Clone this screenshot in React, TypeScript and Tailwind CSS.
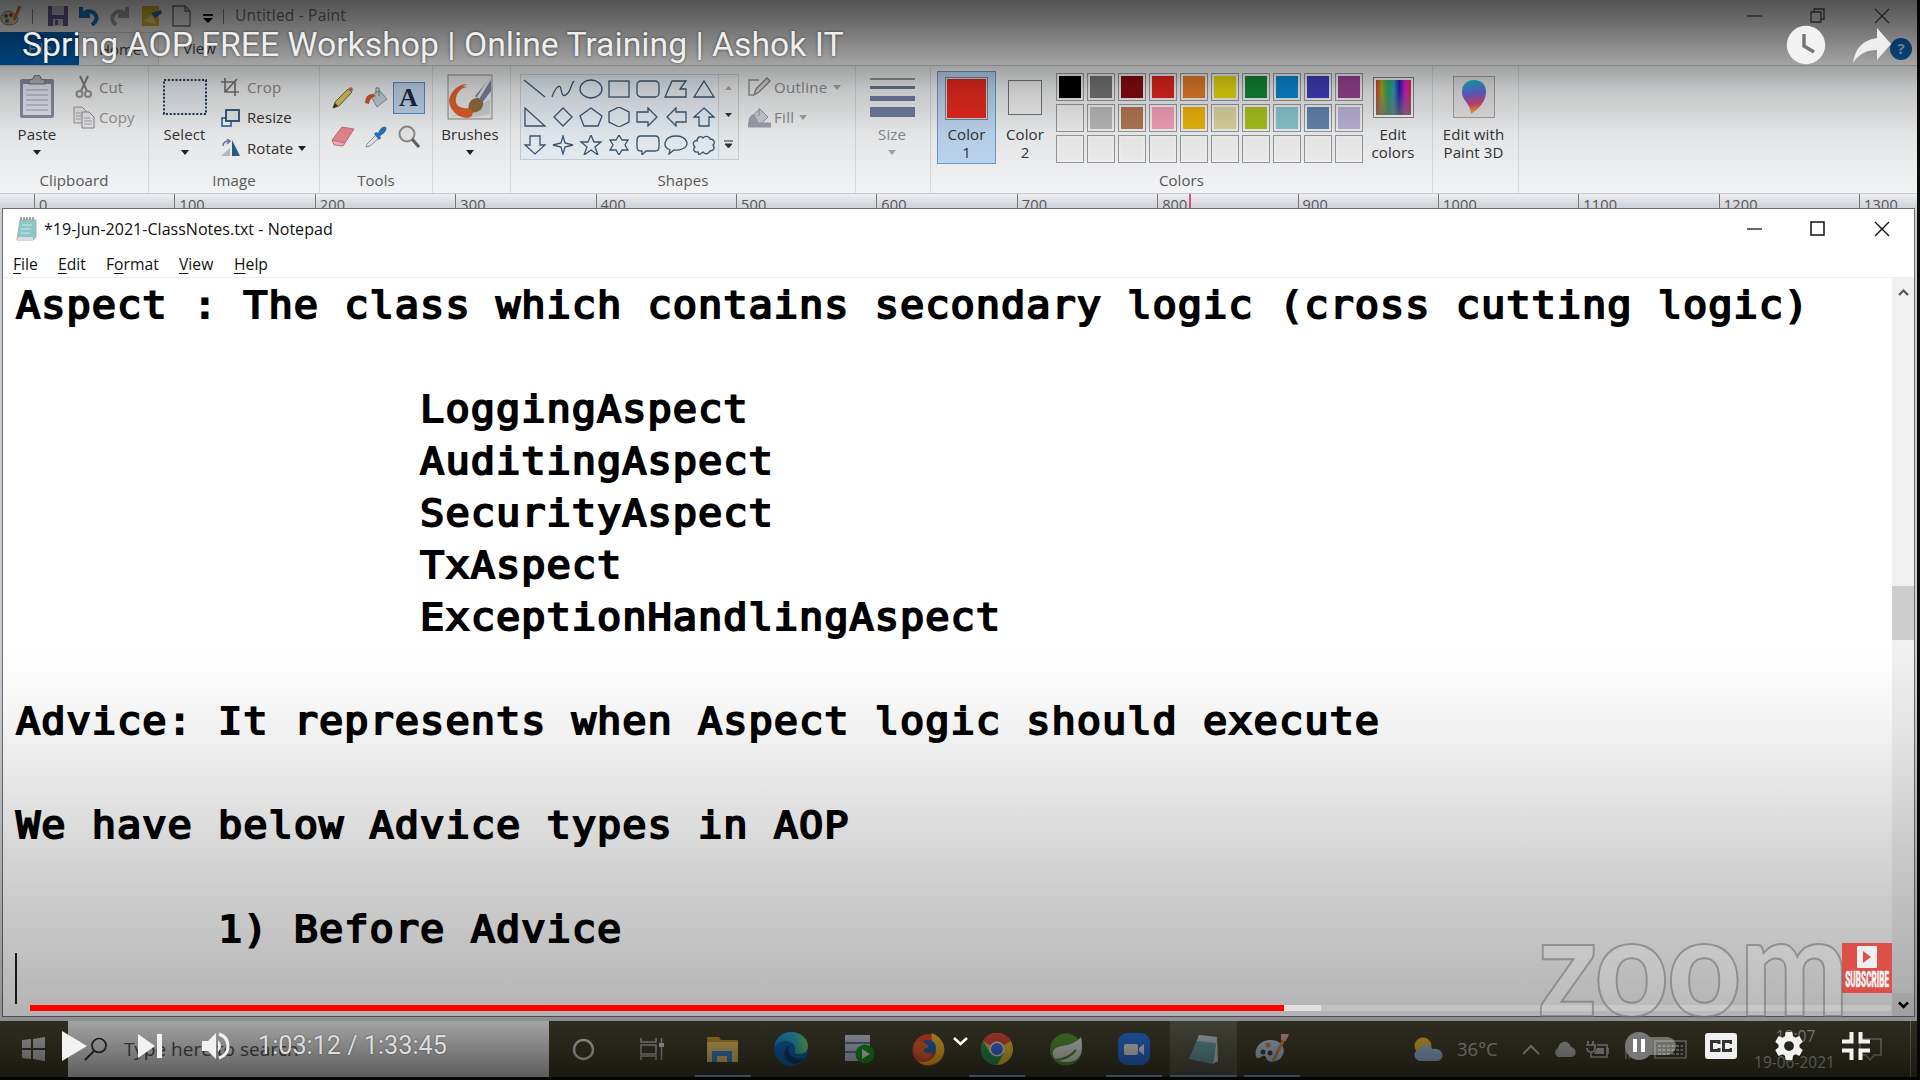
import React from "react";

type Kids = { children?: React.ReactNode };

function Svg({ w, h, vb, className = "", children }: Kids & { w: number; h: number; vb?: string; className?: string }) {
  return (
    <svg width={w} height={h} viewBox={vb ?? `0 0 ${w} ${h}`} fill="none" className={`shrink-0 ${className}`}>
      {children}
    </svg>
  );
}

const Caret = ({ c = "#222" }: { c?: string }) => (
  <Svg w={8} h={5}><path d="M0 0h8L4 5z" fill={c} /></Svg>
);

function Group({ className, label = "", children }: Kids & { className: string; label?: string }) {
  return (
    <div className={`flex h-full shrink-0 flex-col border-r border-[#dcdddf] ${className}`}>
      <div className="flex h-[103px]">{children}</div>
      <div className="-mt-px h-6 text-center leading-6 text-[#5a5a5a]">{label}</div>
    </div>
  );
}

function Big({ className, icon, lines, caret, caretColor, tone = "text-[#333]" }: { className: string; icon: React.ReactNode; lines: string[]; caret?: boolean; caretColor?: string; tone?: string }) {
  return (
    <div className={`flex shrink-0 flex-col items-center pt-2 ${className} ${tone}`}>
      <div className="flex h-[46px] items-center justify-center">{icon}</div>
      <div className="h-[5px]" />
      {lines.map((l) => <div key={l} className="h-[18px] whitespace-nowrap leading-[18px]">{l}</div>)}
      {caret && <div className="flex h-[18px] items-center"><Caret c={caretColor} /></div>}
    </div>
  );
}

function Row({ icon, text, tone = "text-[#333]", caret, caretColor }: { icon: React.ReactNode; text: string; tone?: string; caret?: boolean; caretColor?: string }) {
  return (
    <div className={`flex h-[30.500px] items-center ${tone}`}>
      <div className="flex w-[26px] justify-start">{icon}</div>
      <span className="-mt-px whitespace-nowrap">{text}</span>
      {caret && <span className="ml-[5px]"><Caret c={caretColor} /></span>}
    </div>
  );
}

const PasteIcon = () => (
  <Svg w={36} h={44}>
    <rect x="1" y="4" width="34" height="39" rx="2" fill="#8d91a5" />
    <rect x="4" y="9" width="28" height="31" fill="#eceef6" />
    <path d="M10 9V5l4-1q0-4 4-4t4 4l4 1v4z" fill="#b9bcc6" stroke="#777" />
    <path d="M7 15h22M7 20h22M7 25h22M7 30h22M7 35h22" stroke="#b8bed2" strokeWidth="1.4" />
  </Svg>
);
const CutIcon = () => (
  <Svg w={18} h={24} className="ml-[2px]">
    <path d="M5 1l7 15M13 1L6 16" stroke="#888" strokeWidth="2" />
    <circle cx="4.5" cy="19" r="3" stroke="#999" strokeWidth="2" /><circle cx="13" cy="19" r="3" stroke="#999" strokeWidth="2" />
  </Svg>
);
const CopyIcon = () => (
  <Svg w={22} h={23}>
    <path d="M1 1h8l4 4v12H1z" fill="#eee" stroke="#999" />
    <path d="M9 6h7l5 5v11H9z" fill="#f2f2f2" stroke="#8c8c94" />
    <path d="M3 7h5M3 10h5M3 13h5M11 12h6M11 15h8M11 18h8" stroke="#a8a8b0" />
  </Svg>
);
const BrushIcon = () => (
  <Svg w={46} h={46}>
    <rect x="1" y="1" width="44" height="44" fill="#f0eeee" stroke="#8e8e8e" />
    <path d="M3 43c8-2 12-1 20 1l20-4V26z" fill="#d4d6da" />
    <path d="M44 3L28 22l7 7L44 17z" fill="#7d8796" />
    <path d="M44 3L31 24" stroke="#e4e8ee" strokeWidth="3" />
    <path d="M22 38c-2-9 2-14 9-14l5 4c1 7-5 12-14 10z" fill="#967040" />
    <path d="M20 10C12 10 3 17 2 27c1 9 8 16 17 17 6 0 8-4 6-8-3-3-5-1-8-2C10 33 8 29 9 24c1-6 5-10 11-11-2-1-4-1-6 0z" fill="#e4622c" />
  </Svg>
);

const shapes: React.ReactNode[] = [
  <path d="M1 1l21 17" />,
  <path d="M1 18c3-9 8-14 9-8s2 9 7 4c3-3 3-9 6-12" />,
  <ellipse cx="12" cy="10" rx="11" ry="9" />,
  <rect x="2" y="2" width="20" height="16" />,
  <rect x="1" y="2" width="22" height="16" rx="4" />,
  <path d="M1 18L8 2h14l-6 8h6v8z" />,
  <path d="M12 2l10 16H2z" />,
  <path d="M2 1v18h20z" />,
  <path d="M12 1l9 9-9 9-9-9z" />,
  <path d="M12 1l11 8-4 10H5L1 9z" />,
  <path d="M12 0l10 5v10l-10 5-10-5V5z" />,
  <path d="M1 5h11V1l9 9-9 9v-4H1z" />,
  <path d="M22 5H12V1L3 10l9 9v-4h10z" />,
  <path d="M12 1l10 9h-5v9H7v-9H2z" />,
  <path d="M7 1h10v9h5l-10 9-10-9h5z" />,
  <path d="M12 1l2 7 8 2-8 2-2 7-2-7-8-2 8-2z" />,
  <path d="M12 0l3 7h7l-6 5 3 8-7-5-7 5 3-8-6-5h7z" />,
  <path d="M12 0l3 5h6l-3 5 3 5h-6l-3 5-3-5H3l3-5-3-5h6z" />,
  <path d="M5 1h14q4 0 4 4v7q0 4-4 4h-9l-4 4v-4H5q-4 0-4-4V5q0-4 4-4z" />,
  <path d="M6 15C-3 11 1 1 12 1s15 10 6 13c-4 2-7 1-8 1l-5 4z" />,
  <path d="M6 17c-5 1-5-4-3-5-4-4 0-7 2-6 0-5 5-5 6-3 3-3 7-1 7 1 5 0 5 5 3 6 3 4-1 6-3 6-2 4-6 3-7 1l-4 3z" />,
];

const palette = [
  ["#000", "#777", "#8b0a14", "#e8261c", "#ea802c", "#e8de0c", "#138a3a", "#0a8cd8", "#4040c0", "#9c4496"],
  ["#f6f6f6", "#bebebe", "#b87a56", "#f8a4be", "#f2b80c", "#e0dba2", "#acc81c", "#8accd4", "#6888b4", "#c0b8dc"],
  ["", "", "", "", "", "", "", "", "", ""],
];

function Ribbon() {
  return (
    <div className="flex h-[129px] shrink-0 border-y border-[#cdced0] bg-[#f5f6f7] text-[15px] tracking-[0.1px]">
      <Group className="w-[149px]" label="Clipboard">
        <Big className="w-[74px]" icon={<PasteIcon />} lines={["Paste"]} caret />
        <div className="-ml-px pt-[6px]">
          <Row icon={<CutIcon />} text="Cut" tone="text-[#8c8c8c]" />
          <Row icon={<CopyIcon />} text="Copy" tone="text-[#9a9a9a]" />
        </div>
      </Group>
      <Group className="w-[171px]" label="Image">
        <Big className="w-[71px]" icon={<Svg w={44} h={36}><rect x="1" y="1" width="42" height="34" fill="#eef3f8" stroke="#2b4468" strokeWidth="2" strokeDasharray="2.2 1.6" /></Svg>} lines={["Select"]} caret />
        <div className="pl-[1px] pt-[6px]">
          <Row icon={<Svg w={18} h={18}><path d="M4 0v14h14M0 4h14v14M5 13L16 1" stroke="#777" strokeWidth="1.7" /></Svg>} text="Crop" tone="text-[#8c8c8c]" />
          <Row icon={<Svg w={19} h={18}><rect x="1" y="9" width="9" height="8" fill="#fff" stroke="#33669c" strokeWidth="1.6" /><rect x="5" y="1" width="13" height="11" fill="#e8f0ee" stroke="#28507c" strokeWidth="1.8" /></Svg>} text="Resize" />
          <Row icon={<Svg w={20} h={18}><path d="M0 17l9-8v8z" fill="#b9c0c8" /><path d="M11 1l8 16h-8z" fill="#2d5f86" /><path d="M2 7q0-5 6-5M6 0l3 2-3 3" stroke="#6a78c0" strokeWidth="1.5" /></Svg>} text="Rotate" caret />
        </div>
      </Group>
      <Group className="w-[113px]" label="Tools">
        <div className="ml-[6px] mt-[13px] grid h-[78px] grid-cols-[33px_33px_33px] grid-rows-[38px_39px] items-center justify-items-center">
          <Svg w={22} h={22}><path d="M1 21l2-6L16 2l4 3L7 19z" fill="#e4c860" stroke="#7c6a34" /><path d="M16 2l4 3 1-3-2-2z" fill="#c96a6a" /><path d="M1 21l2-5 3 3z" fill="#333" /></Svg>
          <Svg w={24} h={22}><path d="M7 9l8-6 8 9-10 8z" fill="#c6d2da" stroke="#8195a2" /><path d="M12 6V1h3v8" stroke="#777" /><path d="M1 16q0-9 8-9l3 2q-6 1-7 8z" fill="#d4582c" /></Svg>
          <div className="flex h-8 w-8 items-center justify-center border border-[#5a8fd0] bg-[#c3d9f1] font-['Liberation_Serif'] text-[26px] font-bold leading-none text-[#1c2a44]">A</div>
          <Svg w={24} h={21}><path d="M1 14L11 1l12 2-9 14z" fill="#ee8a94" stroke="#c97880" /><path d="M1 14l13 3-2 3-9-1z" fill="#f6b6bb" stroke="#c97880" /></Svg>
          <Svg w={22} h={22}><path d="M1 21l1-3 9-9 3 3-9 8z" fill="#eef" stroke="#8a96a4" /><path d="M9 8l2-2 2 1q4-8 8-6 2 4-6 9l1 2-2 2z" fill="#2c76ba" /></Svg>
          <Svg w={22} h={23}><circle cx="9" cy="9" r="7.5" fill="#eef0f2" stroke="#909090" strokeWidth="2" /><path d="M14 14l7 8" stroke="#666" strokeWidth="3.2" /></Svg>
        </div>
      </Group>
      <Group className="w-[78px]">
        <Big className="w-[74px]" icon={<BrushIcon />} lines={["Brushes"]} caret />
      </Group>
      <Group className="w-[345px]" label="Shapes">
        <div className="ml-[9px] mt-[8px] flex h-[86px] w-[219px] border border-[#cfd3d8] bg-[#eef5fb]">
          <div className="grid w-[197px] grid-cols-7 grid-rows-3 items-center justify-items-center">
            {shapes.map((s, i) => <Svg key={i} w={24} h={20} className="stroke-[#3c5874] stroke-[1.3]">{s}</Svg>)}
          </div>
          <div className="flex w-[20px] flex-col items-center justify-around border-l border-[#d5d7da] bg-[#f3f4f5]">
            <Svg w={7} h={4}><path d="M0 4h7L3.500 0z" fill="#aaa" /></Svg>
            <Svg w={7} h={4}><path d="M0 0h7L3.500 4z" fill="#333" /></Svg>
            <Svg w={9} h={8}><path d="M0 1h9M1 4h7L4.500 8z" fill="#333" stroke="#333" /></Svg>
          </div>
        </div>
        <div className="pl-[9px] pt-[6px] tracking-[0.3px]">
          <Row icon={<Svg w={23} h={20}><path d="M11 3H1v15h4M18 8v1" stroke="#999" strokeWidth="1.500" /><path d="M6 18l2-6L19 1l3 3-11 11z" fill="#ddd" stroke="#888" strokeWidth="1.400" /></Svg>} text="Outline" tone="text-[#8c8c8c]" caret caretColor="#aaa" />
          <Row icon={<Svg w={23} h={21}><path d="M4 9l8-7 8 8-8 8-8-6z" fill="#d4d4dc" stroke="#9a9aa6" /><path d="M11 1v8M1 16q0-8 5-8l4 8z" fill="#aaaab6" stroke="#9a9aa6" /><path d="M0 18h23" stroke="#a4a4b4" strokeWidth="5" /></Svg>} text="Fill" tone="text-[#8c8c8c]" caret caretColor="#aaa" />
        </div>
      </Group>
      <Group className="w-[75px]">
        <Big className="w-[72px]" icon={
          <div className="flex w-[45px] flex-col">
            <div className="h-[2px] bg-[#989898]" /><div className="mt-[6px] h-[3px] bg-[#6e7890]" /><div className="mt-[7px] h-[5px] bg-[#7480a4]" /><div className="mt-[6px] h-[10px] bg-[#7480a4]" />
          </div>} lines={["Size"]} caret caretColor="#aaa" tone="text-[#8c8c8c]" />
      </Group>
      <Group className="w-[502px]" label="Colors">
        <div className="ml-[6px] mt-[5px] flex h-[93px] w-[59px] shrink-0 flex-col items-center border border-[#6aa0d8] bg-[#c2dcf6] pt-[5px]">
          <div className="h-[43px] w-[43px] border border-[#7a8a9a] bg-[#cfe2f6] p-[1px]"><div className="h-full w-full bg-[#ee2a1e]" /></div>
          <div className="h-[5px]" />
          <div className="h-[18px] leading-[18px] text-[#333]">Color</div>
          <div className="h-[18px] leading-[18px] text-[#333]">1</div>
        </div>
        <Big className="w-[58px]" icon={<div className="h-[35px] w-[34px] border border-[#7a7a7a] bg-[#f8f8f8]" />} lines={["Color", "2"]} />
        <div className="ml-[2px] mt-[7px] grid h-[91px] shrink-0 grid-cols-[repeat(10,28px)] grid-rows-[repeat(3,28px)] gap-[3px]">
          {palette.flat().map((c, i) => (
            <div key={i} className="border border-[#9c9ca0] bg-[#f8f8f8] p-[2px]"><div className="h-full w-full" style={{ background: c || "#f4f4f5" }} /></div>
          ))}
        </div>
        <Big className="w-[60px]" icon={<div className="h-[41px] w-[41px] border border-[#888] bg-white p-[2px]"><div className="h-full w-full bg-[linear-gradient(to_bottom,transparent_30%,#777b),linear-gradient(to_right,#e43830,#a8b028,#28b060,#30a8b8,#2820c0,#e020d0,#d83050)]" /></div>} lines={["Edit", "colors"]} />
      </Group>
      <Group className="w-[86px]">
        <Big className="w-[81px]" icon={
          <div className="flex h-[42px] w-[42px] items-center justify-center border border-[#a8a8a8] bg-[#ececee]">
            <Svg w={24} h={34}>
              <defs><linearGradient id="balloon" x1=".4" y1="0" x2=".5" y2="1"><stop offset="0" stopColor="#1cc0d0" /><stop offset=".4" stopColor="#6868e0" /><stop offset=".7" stopColor="#d84880" /><stop offset="1" stopColor="#f4c020" /></linearGradient></defs>
              <path d="M12 0C4 0 0 5 0 12c0 9 8 10 9 22 8-5 15-13 15-22C24 5 20 0 12 0z" fill="url(#balloon)" />
            </Svg>
          </div>} lines={["Edit with", "Paint 3D"]} />
      </Group>
    </div>
  );
}

function PaintWindow() {
  return (
    <div className="flex h-[1021px] w-[1917px] flex-col overflow-hidden bg-[#c9cfd6] font-['Open_Sans','Noto_Sans',sans-serif]">
      <div className="flex h-8 shrink-0 items-center bg-white">
        <Svg w={23} h={22}><path d="M10 6C2 6-1 12 2 17c3 4 12 4 15 0 2-3 0-8-7-11z" fill="#ecd4b0" stroke="#a47a5a" /><circle cx="6" cy="11" r="2" fill="#3a6ac0" /><circle cx="11" cy="10" r="2" fill="#c04030" /><circle cx="7" cy="16" r="2" fill="#40903c" /><path d="M14 15L20 1" stroke="#d88030" strokeWidth="3" /></Svg>
        <div className="ml-[9px] h-[15px] w-px bg-[#888]" />
        <Svg w={20} h={20} className="ml-[15px]"><path d="M0 0h20v20H0z" fill="#6c5c9c" /><path d="M4 0h12v9H4zM5 13h10v7H5z" fill="#d0ccd8" /><path d="M7 14h3v5H7z" fill="#6c5c9c" /></Svg>
        <Svg w={20} h={20} className="ml-[11px]"><path d="M2 1v9h9M3 9q6-6 12-2 6 6-2 12" stroke="#1c78c8" strokeWidth="4" /></Svg>
        <Svg w={19} h={20} className="ml-[11px]"><path d="M17 1v9H8M16 9q-6-6-11-2-6 6 1 12" stroke="#aaa" strokeWidth="4" /></Svg>
        <Svg w={22} h={22} className="ml-[12px]"><path d="M1 1h17v20H1z" fill="#e4bc2c" /><path d="M20 5L10 8l4 5 7-5z" fill="#2c70c0" /><path d="M3 16l8-6 4 9z" fill="#f8e8a0" /></Svg>
        <Svg w={19} h={22} className="ml-[9px]"><path d="M1 1h12l5 5v15H1zM13 1v5h5" fill="#fafafa" stroke="#777" strokeWidth="1.400" /></Svg>
        <Svg w={10} h={9} className="ml-[12px] mt-1"><path d="M0 0h10v2H0zM0 4h10L5 9z" fill="#111" /></Svg>
        <div className="ml-[10px] h-[15px] w-px bg-[#888]" />
        <span className="ml-[11px] text-[15.500px] tracking-[0.2px] text-[#777]">Untitled - Paint</span>
        <div className="flex-1" />
        <Svg w={16} h={16} className="mr-[47px]"><path d="M0 8h15" stroke="#555" strokeWidth="1.300" /></Svg>
        <Svg w={16} h={16} className="mr-[48px]"><path d="M1 4h10v10H1zM4 4V1h10v10h-3" stroke="#555" strokeWidth="1.300" /></Svg>
        <Svg w={16} h={16} className="mr-[27px]"><path d="M1 1l14 14M15 1L1 15" stroke="#555" strokeWidth="1.300" /></Svg>
      </div>
      <div className="flex h-[33px] shrink-0 items-center bg-white text-[15px] text-[#444]">
        <div className="flex h-full w-[79px] items-center bg-[#0066bc] pl-[28px] text-white/60">File</div>
        <div className="flex h-full w-[80px] items-center border-r border-t border-[#dadbdc] bg-[#f5f6f7] pl-[20px]">Home</div>
        <span className="ml-[24px]">View</span>
        <div className="flex-1" />
        <div className="mr-[5px] flex h-[22px] w-[22px] items-center justify-center rounded-full bg-[#0a6cc0] text-[15px] font-bold text-white/80">?</div>
      </div>
      <Ribbon />
      <div className="flex h-[20px] shrink-0 overflow-hidden bg-gradient-to-b from-[#f2f3f6] via-[#d6d9de] to-[#c8ccd2] pl-[34px] text-[14.500px] tracking-[0.2px] text-[#555]">
        {["0", "100", "200", "300", "400", "500", "600", "700", "800", "900", "1000", "1100", "1200", "1300"].map((n) => (
          <div key={n} className="relative h-full w-[140.400px] shrink-0 border-l border-[#777] pl-[4px] pt-[3px] leading-[15px]">
            {n}
            {n === "800" && <div className="absolute left-[31px] top-0 h-full w-[2px] bg-[#d8506c]" />}
          </div>
        ))}
      </div>
    </div>
  );
}

const notes = [
  "Aspect : The class which contains secondary logic (cross cutting logic)",
  "",
  "                LoggingAspect",
  "                AuditingAspect",
  "                SecurityAspect",
  "                TxAspect",
  "                ExceptionHandlingAspect",
  "",
  "Advice: It represents when Aspect logic should execute",
  "",
  "We have below Advice types in AOP",
  "",
  "        1) Before Advice",
];

function Menu({ pre = "", u, post, className }: { pre?: string; u: string; post: string; className: string }) {
  return <span className={`shrink-0 ${className}`}>{pre}<span className="underline [text-underline-offset:3px] [text-decoration-skip-ink:none] decoration-1">{u}</span>{post}</span>;
}

function Notepad() {
  return (
    <div className="absolute left-[2px] top-[208px] flex h-[809px] w-[1913px] flex-col border border-[#6c6c6c] bg-white font-['Open_Sans','Noto_Sans',sans-serif] text-[#111]">
      <div className="flex h-[40px] shrink-0 items-center pl-[13px]">
        <Svg w={22} h={24}><path d="M4 3h16v17l-3 3H1z" fill="#8cc8c8" stroke="#a0b4b4" /><path d="M3 20h14v3H1z" fill="#ddd" /><path d="M6 8h10M5 12h10M5 16h9" stroke="#c4e8e6" /><path d="M5 3V0M8 3V0M11 3V0M14 3V0M17 3V0" stroke="#555" /></Svg>
        <span className="ml-[6px] text-[16px] tracking-[0.03px]">*19-Jun-2021-ClassNotes.txt - Notepad</span>
        <div className="flex-1" />
        <Svg w={16} h={16} className="mr-[47px]"><path d="M0 8h15" stroke="#111" strokeWidth="1.300" /></Svg>
        <Svg w={16} h={16} className="mr-[48px]"><path d="M1 1h13v13H1z" stroke="#111" strokeWidth="1.500" /></Svg>
        <Svg w={16} h={16} className="mr-[24px]"><path d="M1 1l14 14M15 1L1 15" stroke="#111" strokeWidth="1.400" /></Svg>
      </div>
      <div className="flex h-[29px] shrink-0 items-center border-b border-[#ececec] pl-[10px] pt-[3px] text-[15.700px]">
        <Menu u="F" post="ile" className="w-[45px]" />
        <Menu u="E" post="dit" className="w-[48px]" />
        <Menu pre="F" u="o" post="rmat" className="w-[73px]" />
        <Menu u="V" post="iew" className="w-[55px]" />
        <Menu u="H" post="elp" className="w-[60px]" />
      </div>
      <div className="flex min-h-0 flex-1">
        <div className="min-w-0 flex-1 overflow-hidden pl-[13px] pt-px">
          <div className="origin-left scale-x-[1.06] whitespace-pre font-['DejaVu_Sans_Mono',monospace] text-[38px] leading-[52px] tracking-[0.950px] text-black [-webkit-text-stroke:2px_#000]">
            {notes.map((l, i) => <div key={i} className="h-[52px]">{l}</div>)}
          </div>
          <div className="-ml-px -mt-[2px] h-[51px] w-[1.500px] bg-[#222]" />
        </div>
        <div className="flex w-[22px] flex-col items-center bg-[#f0f0f0]">
          <Svg w={11} h={7} className="mt-[11px]"><path d="M1 6l4.500-4.500L10 6" stroke="#555" strokeWidth="2.200" /></Svg>
          <div className="mt-[290px] h-[54px] w-full bg-[#cdcdcd]" />
          <div className="flex-1" />
          <div className="flex h-[23px] w-full items-center justify-center bg-[#e4e4e4]"><Svg w={11} h={8}><path d="M1 1.500L5.500 6 10 1.500" stroke="#000" strokeWidth="2.600" /></Svg></div>
        </div>
      </div>
    </div>
  );
}

function Task({ className, line = "", children }: Kids & { className: string; line?: string }) {
  return (
    <div className={`flex h-full shrink-0 flex-col items-center ${className}`}>
      <div className="flex flex-1 items-center justify-center">{children}</div>
      <div className={`-mt-[2px] h-[2px] ${line}`} />
    </div>
  );
}

function Taskbar() {
  return (
    <div className="flex h-[56px] w-[1917px] bg-[#45422e] font-['Open_Sans','Noto_Sans',sans-serif]">
      <div className="flex w-[68px] items-center justify-center">
        <Svg w={23} h={24}><path d="M0 3l9-1v9H0zM11 2l12-2v11H11zM0 13h9v9l-9-1zM11 13h12v11l-12-2z" fill="#ccc" /></Svg>
      </div>
      <div className="flex w-[482px] items-center bg-[#f0f0f0] pl-[16px]">
        <Svg w={24} h={24}><circle cx="15" cy="8.500" r="7" stroke="#333" strokeWidth="1.700" /><path d="M10 14L1 23" stroke="#333" strokeWidth="1.900" /></Svg>
        <span className="ml-[16px] whitespace-nowrap text-[19px] text-[#555]">Type here to search</span>
      </div>
      <Task className="w-[68px]"><Svg w={23} h={23}><circle cx="11.500" cy="11.500" r="9.500" stroke="#ddd" strokeWidth="2.400" /></Svg></Task>
      <Task className="w-[69px]"><Svg w={24} h={22}><path d="M1 0v4h15V0M1 7h15v9H1zM1 22v-4h15v4M21.500 0v22" stroke="#bbb" strokeWidth="1.500" /><path d="M19 5h5v4h-5z" fill="#ddd" /></Svg></Task>
      <Task className="w-[73px]" line="w-[56px] bg-[#8cbcf0]"><Svg w={31} h={26}><path d="M0 1h12l2 3h17v22H0z" fill="#d0982c" /><path d="M0 6h31v20H0z" fill="#f4cc6c" /><path d="M5 26V15h20v11h-5v-6H10v6z" fill="#3a90dc" /></Svg></Task>
      <Task className="w-[64px]">
        <Svg w={34} h={34}>
          <defs><linearGradient id="edgeG" x1="0" y1=".4" x2="1" y2=".4"><stop offset="0" stopColor="#1c8ce0" /><stop offset=".6" stopColor="#2cb4c8" /><stop offset="1" stopColor="#74dc74" /></linearGradient></defs>
          <circle cx="17" cy="17" r="17" fill="#1668b8" />
          <path d="M0 16C1 6 8 0 17 0c10 0 17 7 17 14 0 5-4 8-9 8-6 0-4-3-4-6 0-4-4-7-9-7-6 0-10 3-12 7z" fill="url(#edgeG)" />
          <path d="M16 13c-5 8 4 16 14 13-4 8-14 7-18 1-4-7 0-12 4-14z" fill="#123f78" />
        </Svg>
      </Task>
      <Task className="w-[73px]"><Svg w={30} h={30}><path d="M0 1h25v26H0z" fill="#c4cce4" /><path d="M0 9h25M0 18h25" stroke="#6c7894" strokeWidth="2" /><circle cx="20" cy="20" r="9.500" fill="#1c9c1c" /><path d="M17 15l8 5-8 5z" fill="#eee" /></Svg></Task>
      <Task className="w-[64px]">
        <Svg w={33} h={33}><circle cx="16.500" cy="17" r="16" fill="#f0502c" /><path d="M20 0c14 6 15 20 8 27-8 7-18 6-22 1 9 3 17-2 18-9 0-7-6-9-4-19z" fill="#fcc42c" /><circle cx="16" cy="15" r="8" fill="#2868c8" /><path d="M4 8c2 1 4 0 7 1l6 4c-2 3-6 2-5 5 2 3 6 3 8 0 0 7-6 9-11 7C2 22 0 14 4 8z" fill="#f4682c" /></Svg>
      </Task>
      <Task className="w-[74px]" line="w-[56px] bg-[#8cbcf0]">
        <Svg w={32} h={32}><circle cx="16" cy="16" r="16" fill="#f4c838" /><path d="M16 16L2.100 8A16 16 0 0 1 29.900 8z" fill="#e84c3c" /><path d="M16 0a16 16 0 0 1 13.900 8H16z" fill="#e84c3c" /><path d="M2.100 8A16 16 0 0 0 16 32l7-12-14 0z" fill="#2c9c54" /><circle cx="16" cy="16" r="7.500" fill="#eee" /><circle cx="16" cy="16" r="6" fill="#3c78e8" /></Svg>
      </Task>
      <Task className="w-[64px]"><Svg w={34} h={33}><circle cx="17" cy="16.500" r="16" fill="#5c9c38" /><path d="M32 4c3 14 0 25-14 25C9 29 3 26 4 19c2-9 18-3 28-15z" fill="#e4ecde" /><path d="M5 27c10 0 17-4 22-10" stroke="#5c8c48" strokeWidth="2" /></Svg></Task>
      <Task className="w-[72px]" line="w-[56px] bg-[#8cbcf0]"><Svg w={32} h={32}><rect width="32" height="32" rx="9" fill="#2c78e8" /><rect x="6" y="11" width="14" height="11" rx="2" fill="#eee" /><path d="M21 15l5-4v11l-5-4z" fill="#eee" /></Svg></Task>
      <Task className="w-[67px] bg-white/15" line="w-full bg-[#8cbcf0]"><Svg w={30} h={31}><path d="M10 1l18 2-4 27-24-5z" fill="#6fa6ac" /><path d="M10 1l18 2-1 6L8 7z" fill="#c4d4d6" /><path d="M28 3l1 24-5 3z" fill="#d4dcdc" /></Svg></Task>
      <Task className="w-[70px]" line="w-[56px] bg-[#8cbcf0]"><Svg w={34} h={33}><path d="M14 7C4 8-1 16 1 24c3 4 7-4 10 0 1 6 8 6 14 2 8-8 3-20-11-19z" fill="#b8d4e4" /><circle cx="8" cy="19" r="2.500" fill="#444" /><circle cx="15" cy="20" r="2.500" fill="#444" /><circle cx="13" cy="12" r="2.500" fill="#d88040" /><path d="M18 28L29 6" stroke="#d89048" strokeWidth="3" /><path d="M26 1h8l-3 7-5-1z" fill="#e0a898" /></Svg></Task>
      <div className="flex-1" />
      <div className="flex w-[610px] shrink-0 items-center text-[#bbb]">
        <div className="ml-[107px] flex w-[43px]"><Svg w={29} h={24}><circle cx="9" cy="9" r="8.500" fill="#f4c03c" /><path d="M7 24a6 6 0 0 1-1-12c1-5 10-6 12 0 12-2 14 11 5 12z" fill="#a4c4e8" /></Svg></div>
        <span className="w-[65px] whitespace-nowrap text-[18.500px]">36°C</span>
        <Svg w={18} h={11}><path d="M1 10l8-8 8 8" stroke="#bbb" strokeWidth="2" /></Svg>
        <Svg w={23} h={16} className="ml-[13px]"><path d="M5 16A5 5 0 0 1 5 7c2-8 11-8 13-1 6 1 6 9 1 10z" fill="#bbb" /></Svg>
        <Svg w={24} h={18} className="ml-[10px]"><path d="M2 1v4M7 1v4M0 5h9v3q0 4-4 4t-4-4M5 12v5h16V5H11M22 8v6" stroke="#bbb" strokeWidth="1.700" /><path d="M11 8h7v6H8z" fill="#bbb" /></Svg>
        <span className="ml-[14px] w-[30px] pt-3 text-[13px]">IN</span>
        <Svg w={33} h={19}><path d="M1 1h31v17H1z" stroke="#aaa" strokeWidth="1.600" /><path d="M4 6h25M4 10h25M4 14h25" stroke="#aaa" strokeWidth="2" strokeDasharray="3 1.500" /></Svg>
        <div className="ml-[65px] flex w-[85px] flex-col items-center whitespace-nowrap text-[15.500px] leading-[26px]"><span className="ml-[2px]">18:07</span><span>19-06-2021</span></div>
        <Svg w={24} h={23} className="ml-[22px]"><path d="M1 1h21v16h-7l-4 5-4-5H1z" stroke="#999" strokeWidth="1.600" /></Svg>
        <div className="ml-[27px] h-full w-px bg-[#8a8878]" />
      </div>
    </div>
  );
}

function PlayerOverlay() {
  return (
    <div className="absolute inset-0 flex flex-col font-['Roboto',sans-serif]">
      <div className="flex h-[90px] shrink-0 items-center pl-[22px]">
        <span className="whitespace-nowrap text-[33.750px] leading-[88px] text-[#eee] [text-shadow:0_0_3px_rgba(0,0,0,.6)]">Spring AOP FREE Workshop | Online Training | Ashok IT</span>
        <div className="flex-1" />
        <Svg w={40} h={40} className="mr-[27px]"><circle cx="20" cy="20" r="19.200" fill="#f2f2f2" /><path d="M18 9v12l10 6" stroke="#777" strokeWidth="3.500" /></Svg>
        <Svg w={38} h={35} className="mr-[29px]"><path d="M24 0l14 16-14 16V22C13 22 6 26 0 35 2 20 10 12 24 10z" fill="#eee" /></Svg>
      </div>
      <div className="flex-1" />
      <div className="flex h-[74px] items-start justify-end pr-[28px]">
        <div className="-mt-[17px] mr-[-2px] flex h-[74px] w-[304px] items-center justify-center overflow-visible">
          <span className="origin-center scale-x-[0.935] font-['Lato',sans-serif] text-[138px] font-black leading-[60px] tracking-[-2px] text-white/10 [-webkit-text-stroke:2px_rgba(110,110,110,.6)]">zoom</span>
        </div>
        <div className="flex h-[50px] w-[50px] shrink-0 flex-col items-center bg-[#dd4f47] pt-[3px]">
          <div className="flex h-[22px] w-[20px] items-center justify-center rounded-[1px] bg-[#eee]"><Svg w={8} h={12}><path d="M0 0l8 6-8 6z" fill="#dd4f47" /></Svg></div>
          <div className="flex h-[24px] w-[46px] items-center justify-center"><span className="scale-x-[0.370] text-[22px] font-black leading-[24px] text-[#f2f2f2] [-webkit-text-stroke:0.500px_#f2f2f2]">SUBSCRIBE</span></div>
        </div>
      </div>
      <div className="mx-[30px] mt-[-12px] flex h-[6.500px] shrink-0 bg-white/20">
        <div className="w-[1254px] bg-[#ff0000]" />
        <div className="w-[37px] bg-white/50" />
      </div>
      <div className="flex h-[69px] shrink-0 items-center">
        <Svg w={25} h={30} className="ml-[62px]"><path d="M0 0l25 15L0 30z" fill="#f2f2f2" /></Svg>
        <Svg w={24} h={24} className="ml-[51px]"><path d="M0 0l17 12L0 24zM19 0h5v24h-5z" fill="#f2f2f2" /></Svg>
        <Svg w={28} h={28} className="ml-[40px]"><path d="M0 9h6l8-8v26l-8-8H0z" fill="#f2f2f2" /><path d="M16 8q6 6 0 12z" fill="#f2f2f2" /><path d="M17 2q9 3 9 12t-9 12" stroke="#f2f2f2" strokeWidth="3" /></Svg>
        <span className="ml-[28px] mt-px whitespace-nowrap text-[25.200px] text-[#ddd] [text-shadow:0_0_2px_rgba(0,0,0,.5)]">1:03:12 / 1:33:45</span>
        <div className="flex-1" />
        <Svg w={15} h={9} className="absolute left-[953px] mb-[9px]"><path d="M1 1l6.500 6L14 1" stroke="#fff" strokeWidth="2.600" /></Svg>
        <div className="relative mr-[29px] flex h-[28px] w-[51px] items-center">
          <div className="absolute left-[14px] h-[18px] w-[37px] rounded-full bg-white/35" />
          <div className="relative flex h-[28px] w-[28px] items-center justify-center gap-[4px] rounded-full bg-[#777]">
            <div className="h-[13px] w-[4px] bg-white" /><div className="h-[13px] w-[4px] bg-white" />
          </div>
        </div>
        <div className="mr-[38px] flex h-[26px] w-[32px] items-center justify-center rounded-[3px] bg-[#f0f0f0]">
          <Svg w={22} h={12}><path d="M9 4V1.500H1.500v9H9V8M21 4V1.500h-7.500v9H21V8" stroke="#333" strokeWidth="3" /></Svg>
        </div>
        <Svg w={28} h={30} className="mr-[39px]" vb="2 1.800 20 20.400"><path fill="#f2f2f2" fillRule="evenodd" d="M19.430 12.980c.04-.32.07-.64.07-.98s-.03-.66-.07-.98l2.110-1.650c.19-.15.24-.42.12-.64l-2-3.460c-.12-.22-.39-.3-.61-.22l-2.490 1c-.52-.4-1.080-.73-1.690-.98l-.38-2.650C14.460 2.180 14.250 2 14 2h-4c-.25 0-.46.18-.49.42l-.38 2.650c-.61.25-1.170.59-1.690.98l-2.490-1c-.23-.09-.49 0-.61.22l-2 3.460c-.13.22-.07.49.12.64l2.110 1.650c-.04.32-.07.65-.07.98s.03.66.07.98l-2.110 1.650c-.19.15-.24.42-.12.64l2 3.460c.12.22.39.3.61.22l2.490-1c.52.4 1.080.73 1.690.98l.38 2.650c.03.24.24.42.49.42h4c.25 0 .46-.18.49-.42l.38-2.650c.61-.25 1.170-.59 1.690-.98l2.490 1c.23.09.49 0 .61-.22l2-3.460c.12-.22.07-.49-.12-.64l-2.110-1.650zM12 15.500a3.500 3.500 0 1 1 0-7 3.500 3.500 0 0 1 0 7z" /></Svg>
        <Svg w={28} h={28} className="mr-[50px]"><path d="M9.500 0v9.500H0M18.500 0v9.500H28M9.500 28v-9.500H0M18.500 28v-9.500H28" stroke="#f2f2f2" strokeWidth="4" /></Svg>
      </div>
    </div>
  );
}

export default function App() {
  return (
    <div className="relative h-[1080px] w-[1920px] overflow-hidden bg-[#0c0c0c]">
      <div className="flex flex-col">
        <PaintWindow />
        <Taskbar />
      </div>
      <Notepad />
      <div className="absolute inset-x-0 top-0 h-[208px] bg-[linear-gradient(to_bottom,rgba(0,0,0,.68),rgba(0,0,0,.56)_25px,rgba(0,0,0,.36)_64px,rgba(0,0,0,.2)_90px,rgba(0,0,0,.07)_135px,rgba(0,0,0,0))]" />
      <div className="absolute inset-x-0 bottom-0 h-[430px] bg-[linear-gradient(to_bottom,rgba(0,0,0,0),rgba(0,0,0,.06)_90px,rgba(0,0,0,.17)_210px,rgba(0,0,0,.26)_320px,rgba(0,0,0,.3)_368px,rgba(0,0,0,.62)_428px)]" />
      <PlayerOverlay />
    </div>
  );
}
